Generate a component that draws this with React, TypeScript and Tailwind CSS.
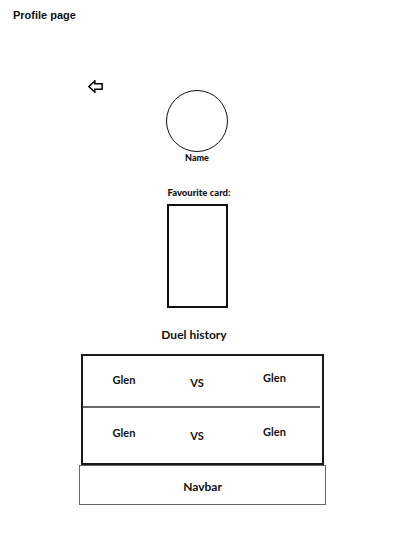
import React from "react";

const lato = { fontFamily: "Lato, 'Open Sans', sans-serif" };

export default function App() {
  return (
    <div className="w-[418px] h-[557px] bg-white text-[#111] overflow-hidden">
      <div
        className="pt-[8px] pl-[13px] text-[11px] leading-[14px] font-bold"
        style={{ fontFamily: "'Liberation Sans', Arial, sans-serif" }}
      >
        Profile page
      </div>

      <div className="flex items-start">
        <svg
          className="ml-[88px] mt-[58px]"
          width="15"
          height="13"
          viewBox="0 0 15 13"
        >
          <polygon
            points="0.9,6.5 6.8,0.9 6.8,3.8 14.1,3.8 14.1,9.2 6.8,9.2 6.8,12.1"
            fill="none"
            stroke="#000"
            strokeWidth="1.5"
            strokeLinejoin="miter"
          />
        </svg>
        <div className="ml-[62px] mt-[68px] w-[64px] flex flex-col items-center" style={lato}>
          <div className="w-[62px] h-[62px] rounded-full border-[1.5px] border-[#111]" />
          <div className="text-[9px] leading-[12px] font-black">Name</div>
        </div>
      </div>

      <div className="ml-[159px] w-[80px] flex flex-col items-center" style={lato}>
        <div className="mt-[23px] text-[9.5px] leading-[12px] font-black whitespace-nowrap">Favourite card:</div>
        <div className="mt-[5px] ml-[-3px] w-[61px] h-[104px] border-2 border-[#111]" />
      </div>

      <div className="ml-[150px] w-[88px] text-center mt-[18px] text-[12px] leading-[18px] font-bold" style={lato}>
        Duel history
      </div>

      <div className="mt-[10px] ml-[81px] w-[243px] border-2 border-[#1a1a1a]" style={lato}>
        <div className="flex h-[50px] text-[11px] leading-[14px] font-bold">
          <div className="w-[82px] text-center pt-[17px]">Glen</div>
          <div className="w-[64px] text-center pt-[20px]">VS</div>
          <div className="flex-1 text-center pt-[15px] pr-[2px]">Glen</div>
        </div>
        <div className="h-[2px] mr-[2px] bg-[#666]" />
        <div className="flex h-[55px] text-[11px] leading-[14px] font-bold">
          <div className="w-[82px] text-center pt-[18px]">Glen</div>
          <div className="w-[64px] text-center pt-[21px]">VS</div>
          <div className="flex-1 text-center pt-[17px] pr-[2px]">Glen</div>
        </div>
      </div>

      <div
        className="ml-[79px] w-[247px] h-[40px] border border-[#666] text-center pt-[13px] text-[12px] leading-[16px] font-bold"
        style={lato}
      >
        Navbar
      </div>
    </div>
  );
}
